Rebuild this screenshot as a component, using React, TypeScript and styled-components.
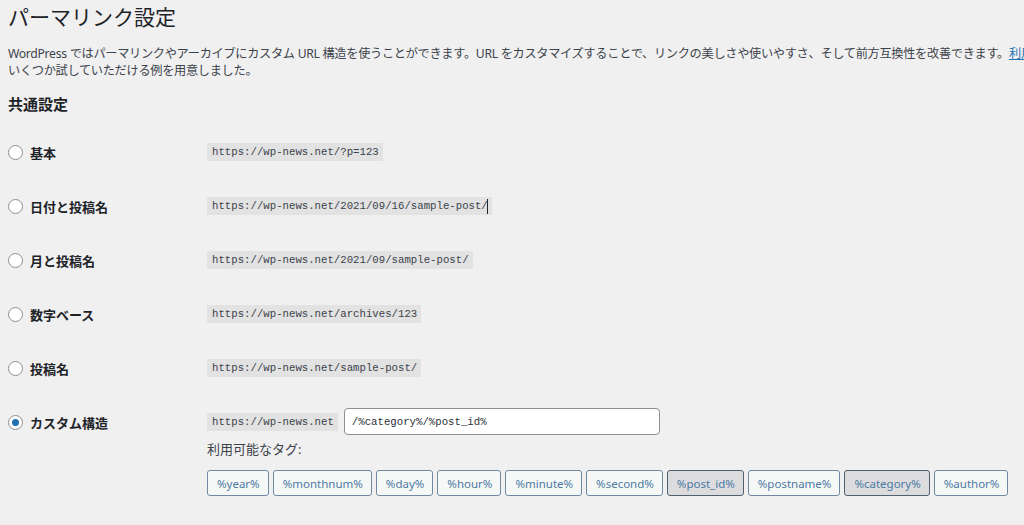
import React from 'react';
import styled, { createGlobalStyle } from 'styled-components';

const GlobalStyle = createGlobalStyle`
  html, body {
    margin: 0;
    padding: 0;
    background: #f0f0f1;
    overflow: hidden;
  }
  body {
    font-family: "Noto Sans", "Noto Sans CJK JP", sans-serif;
    color: #3c434a;
    font-size: 13px;
  }
`

const Page = styled.div`
  width: 1024px;
  height: 525px;
  padding: 3px 0 0 8px;
  box-sizing: border-box;
`

const Title = styled.h1`
  margin: 0;
  font-size: 21px;
  line-height: 28px;
  font-weight: 400;
  color: #1d2327;
`

const Intro = styled.p`
  margin: 14px 0 0;
  font-size: 12.2px;
  letter-spacing: -0.3px;
  line-height: 17px;
  white-space: nowrap;
  color: #3c434a;
  a {
    color: #2271b1;
    text-decoration: underline;
  }
`

const Section = styled.h2`
  margin: 15px 0 0;
  font-size: 15px;
  line-height: 20px;
  font-weight: 700;
  color: #1d2327;
`

const Table = styled.div`
  margin-top: 12px;
  display: flex;
  flex-direction: column;
`

const Row = styled.div`
  display: grid;
  grid-template-columns: 199px 1fr;
  min-height: 54px;
`

const Th = styled.label`
  display: flex;
  align-items: center;
  gap: 7px;
  height: 18px;
  margin-top: 17px;
  font-weight: 700;
  color: #1d2327;
`

const Radio = styled.span<{ $checked?: boolean }>`
  width: 13px;
  height: 13px;
  border: 1px solid #8c8f94;
  border-radius: 50%;
  background: #fff;
  display: flex;
  align-items: center;
  justify-content: center;
  &::after {
    content: '';
    display: ${p => (p.$checked ? 'block' : 'none')};
    width: 7px;
    height: 7px;
    border-radius: 50%;
    background: #2271b1;
  }
`

const Td = styled.div<{ $top?: number }>`
  padding-top: ${p => p.$top ?? 17}px;
  display: flex;
  flex-direction: column;
  align-items: flex-start;
`

const Code = styled.code`
  display: inline-flex;
  align-items: center;
  height: 18px;
  padding: 0 4px 0 5px;
  background: #e2e2e3;
  color: #3c434a;
  font-family: "Liberation Mono", "DejaVu Sans Mono", monospace;
  font-size: 10.7px;
`

const Cursor = styled.span`
  display: inline-block;
  width: 1px;
  height: 15px;
  margin-left: -1px;
  background: #1d2327;
`

const InputLine = styled.div`
  display: flex;
  align-items: center;
  gap: 6px;
`

const Input = styled.input`
  width: 316px;
  height: 27px;
  box-sizing: border-box;
  border: 1px solid #8c8f94;
  border-radius: 4px;
  background: #fff;
  padding: 0 7px;
  color: #2c3338;
  font-family: "Liberation Mono", "DejaVu Sans Mono", monospace;
  font-size: 10.7px;
  outline: none;
`

const TagsLabel = styled.div`
  margin-top: 6px;
  line-height: 17px;
  color: #3c434a;
`

const Tags = styled.div`
  margin-top: 12px;
  display: flex;
  gap: 4px;
`

const Tag = styled.button<{ $active?: boolean }>`
  height: 26px;
  padding: 0 8px 0 9px;
  border: 1px solid ${p => (p.$active ? '#51606f' : '#6f8aa2')};
  border-radius: 3px;
  background: ${p => (p.$active ? '#dcdcde' : '#f6f7f7')};
  color: #4d7aa3;
  font-family: "Noto Sans", sans-serif;
  font-size: 11.5px;
  cursor: pointer;
`

const options = [
  { label: '基本', url: 'https://wp-news.net/?p=123' },
  { label: '日付と投稿名', url: 'https://wp-news.net/2021/09/16/sample-post/', cursor: true },
  { label: '月と投稿名', url: 'https://wp-news.net/2021/09/sample-post/' },
  { label: '数字ベース', url: 'https://wp-news.net/archives/123' },
  { label: '投稿名', url: 'https://wp-news.net/sample-post/' },
]

const tags = [
  '%year%', '%monthnum%', '%day%', '%hour%', '%minute%',
  '%second%', '%post_id%', '%postname%', '%category%', '%author%',
]
const activeTags = ['%post_id%', '%category%']

export default function App() {
  return (
    <>
      <GlobalStyle />
      <Page>
        <Title>パーマリンク設定</Title>
        <Intro>
          WordPress ではパーマリンクやアーカイブにカスタム URL 構造を使うことができます。URL をカスタマイズすることで、リンクの美しさや使いやすさ、そして前方互換性を改善できます。<a href="#">利用可能なタグが多数あります</a>。以下に
          <br />
          いくつか試していただける例を用意しました。
        </Intro>
        <Section>共通設定</Section>
        <Table>
          {options.map(o => (
            <Row key={o.label}>
              <Th>
                <Radio />
                {o.label}
              </Th>
              <Td>
                <Code>
                  {o.url}
                  {o.cursor && <Cursor />}
                </Code>
              </Td>
            </Row>
          ))}
          <Row>
            <Th>
              <Radio $checked />
              カスタム構造
            </Th>
            <Td $top={12}>
              <InputLine>
                <Code>https://wp-news.net</Code>
                <Input defaultValue="/%category%/%post_id%" />
              </InputLine>
              <TagsLabel>利用可能なタグ:</TagsLabel>
              <Tags>
                {tags.map(t => (
                  <Tag key={t} $active={activeTags.includes(t)}>{t}</Tag>
                ))}
              </Tags>
            </Td>
          </Row>
        </Table>
      </Page>
    </>
  );
}
